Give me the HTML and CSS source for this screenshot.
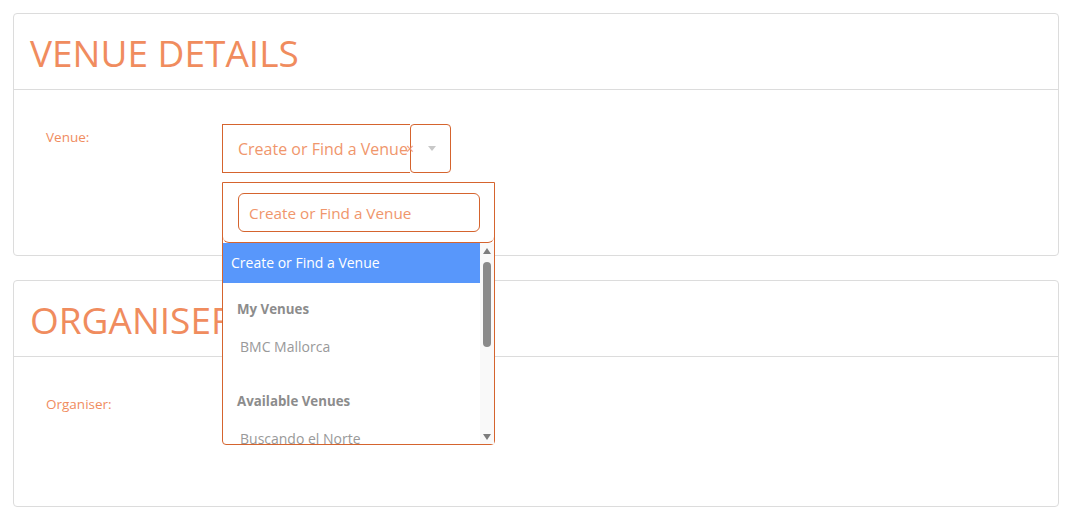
FILE: index.html
```html
<!DOCTYPE html>
<html>
  <head>
    <meta charset="UTF-8">
    <title>Venue Details</title>
    <link rel="stylesheet" href="styles.css">
  </head>
  <body>
    <div class="card">
      <div class="card-header">
        <h2>VENUE DETAILS</h2>
      </div>
      <div class="card-body venue-body">
        <label class="field-label">Venue:</label>
        <div class="select-wrap">
          <div class="select">
            <span class="select-text">Create or Find a Venue<span class="clear">&times;</span></span>
            <span class="select-arrow"><b></b></span>
          </div>
          <div class="dropdown">
            <div class="search">
              <input type="text" placeholder="Create or Find a Venue">
            </div>
            <div class="results-wrap">
              <ul class="results">
                <li class="option active">Create or Find a Venue</li>
                <li class="group">
                  <div class="group-label">My Venues</div>
                  <div class="option sub">BMC Mallorca</div>
                </li>
                <li class="group">
                  <div class="group-label">Available Venues</div>
                  <div class="option sub">Buscando el Norte</div>
                </li>
              </ul>
              <div class="scrollbar">
                <span class="arrow up"></span>
                <span class="thumb"></span>
                <span class="arrow down"></span>
              </div>
            </div>
          </div>
        </div>
      </div>
    </div>

    <div class="card">
      <div class="card-header">
        <h2>ORGANISER</h2>
      </div>
      <div class="card-body organiser-body">
        <label class="field-label">Organiser:</label>
      </div>
    </div>
  </body>
</html>
```

FILE: styles.css
```css
/* Page */
body {
  margin: 0;
  padding: 13px 12px 13px 13px;
  font-family: "Open Sans", Lato, sans-serif;
  background: #fff;
}

/* Cards */
.card {
  border: 1px solid #dcdcdc;
  border-radius: 4px;
  margin-bottom: 24px;
}

.card-header {
  height: 75px;
  border-bottom: 1px solid #dcdcdc;
  display: flex;
  align-items: center;
  padding: 0 16px;
}

.card-header h2 {
  margin: 0;
  font-weight: 400;
  font-size: 37px;
  color: #f08c5e;
  padding-top: 2px;
}

.card-body {
  display: flex;
  padding: 34px 32px 0 32px;
}

.venue-body {
  height: 131px;
}

.organiser-body {
  height: 115px;
}

.field-label {
  width: 176px;
  font-size: 13.5px;
  color: #f08c5e;
  padding-top: 4px;
}

/* Select box */
.select-wrap {
  position: relative;
}

.select {
  display: flex;
  height: 49px;
}

.select-text {
  width: 172px;
  padding-left: 15px;
  border: 1px solid #d5642e;
  border-right: none;
  display: flex;
  align-items: center;
  white-space: nowrap;
  font-size: 16px;
  color: #f0966c;
}

.clear {
  font-size: 14px;
  margin-left: -2px;
  position: relative;
  z-index: 1;
}

.select-arrow {
  width: 39px;
  border: 1px solid #d5642e;
  border-radius: 4px;
  display: flex;
  align-items: center;
  justify-content: center;
}

.select-arrow b {
  width: 0;
  height: 0;
  border-left: 4px solid transparent;
  border-right: 4px solid transparent;
  border-top: 5px solid #c8c8c8;
  margin-left: 2px;
}

/* Dropdown */
.dropdown {
  position: absolute;
  top: 58px;
  left: 0;
  width: 271px;
  border: 1px solid #d5642e;
  border-radius: 0 0 4px 4px;
  background: #fff;
  z-index: 10;
}

.search {
  padding: 10px 14px 10px 15px;
  border-bottom: 1px solid #d5642e;
  border-radius: 0 0 6px 6px;
}

.search input {
  width: 100%;
  box-sizing: border-box;
  height: 39px;
  border: 1px solid #d5642e;
  border-radius: 6px;
  padding: 0 10px;
  font-family: inherit;
  font-size: 15.3px;
  outline: none;
}

.search input::placeholder {
  color: #f0966c;
}

.results-wrap {
  display: flex;
  height: 201px;
}

.results {
  flex: 1;
  list-style: none;
  margin: 0;
  padding: 0;
  overflow: hidden;
}

.option {
  padding: 10px 8px;
  line-height: 18px;
  font-size: 14px;
  color: #999;
  white-space: nowrap;
}

.option.active {
  background: #5897fb;
  color: #fff;
  padding: 11px 8px;
}

.group {
  padding-bottom: 9px;
}

.group-label {
  padding: 16px 14px 9px 14px;
  line-height: 20px;
  font-size: 13.3px;
  font-weight: 700;
  color: #8c8c8c;
}

.option.sub {
  padding-left: 17px;
}

/* Scrollbar */
.scrollbar {
  width: 14px;
  background: #f9f9f9;
  display: flex;
  flex-direction: column;
  align-items: center;
  padding: 5px 0 4px;
  box-sizing: border-box;
}

.arrow {
  width: 0;
  height: 0;
  border-left: 4px solid transparent;
  border-right: 4px solid transparent;
}

.arrow.up {
  border-bottom: 6px solid #7d7d7d;
}

.arrow.down {
  border-top: 6px solid #7d7d7d;
  margin-top: auto;
}

.thumb {
  width: 8px;
  height: 85px;
  border-radius: 4px;
  background: #8a8a8a;
  margin-top: 8px;
}
```
